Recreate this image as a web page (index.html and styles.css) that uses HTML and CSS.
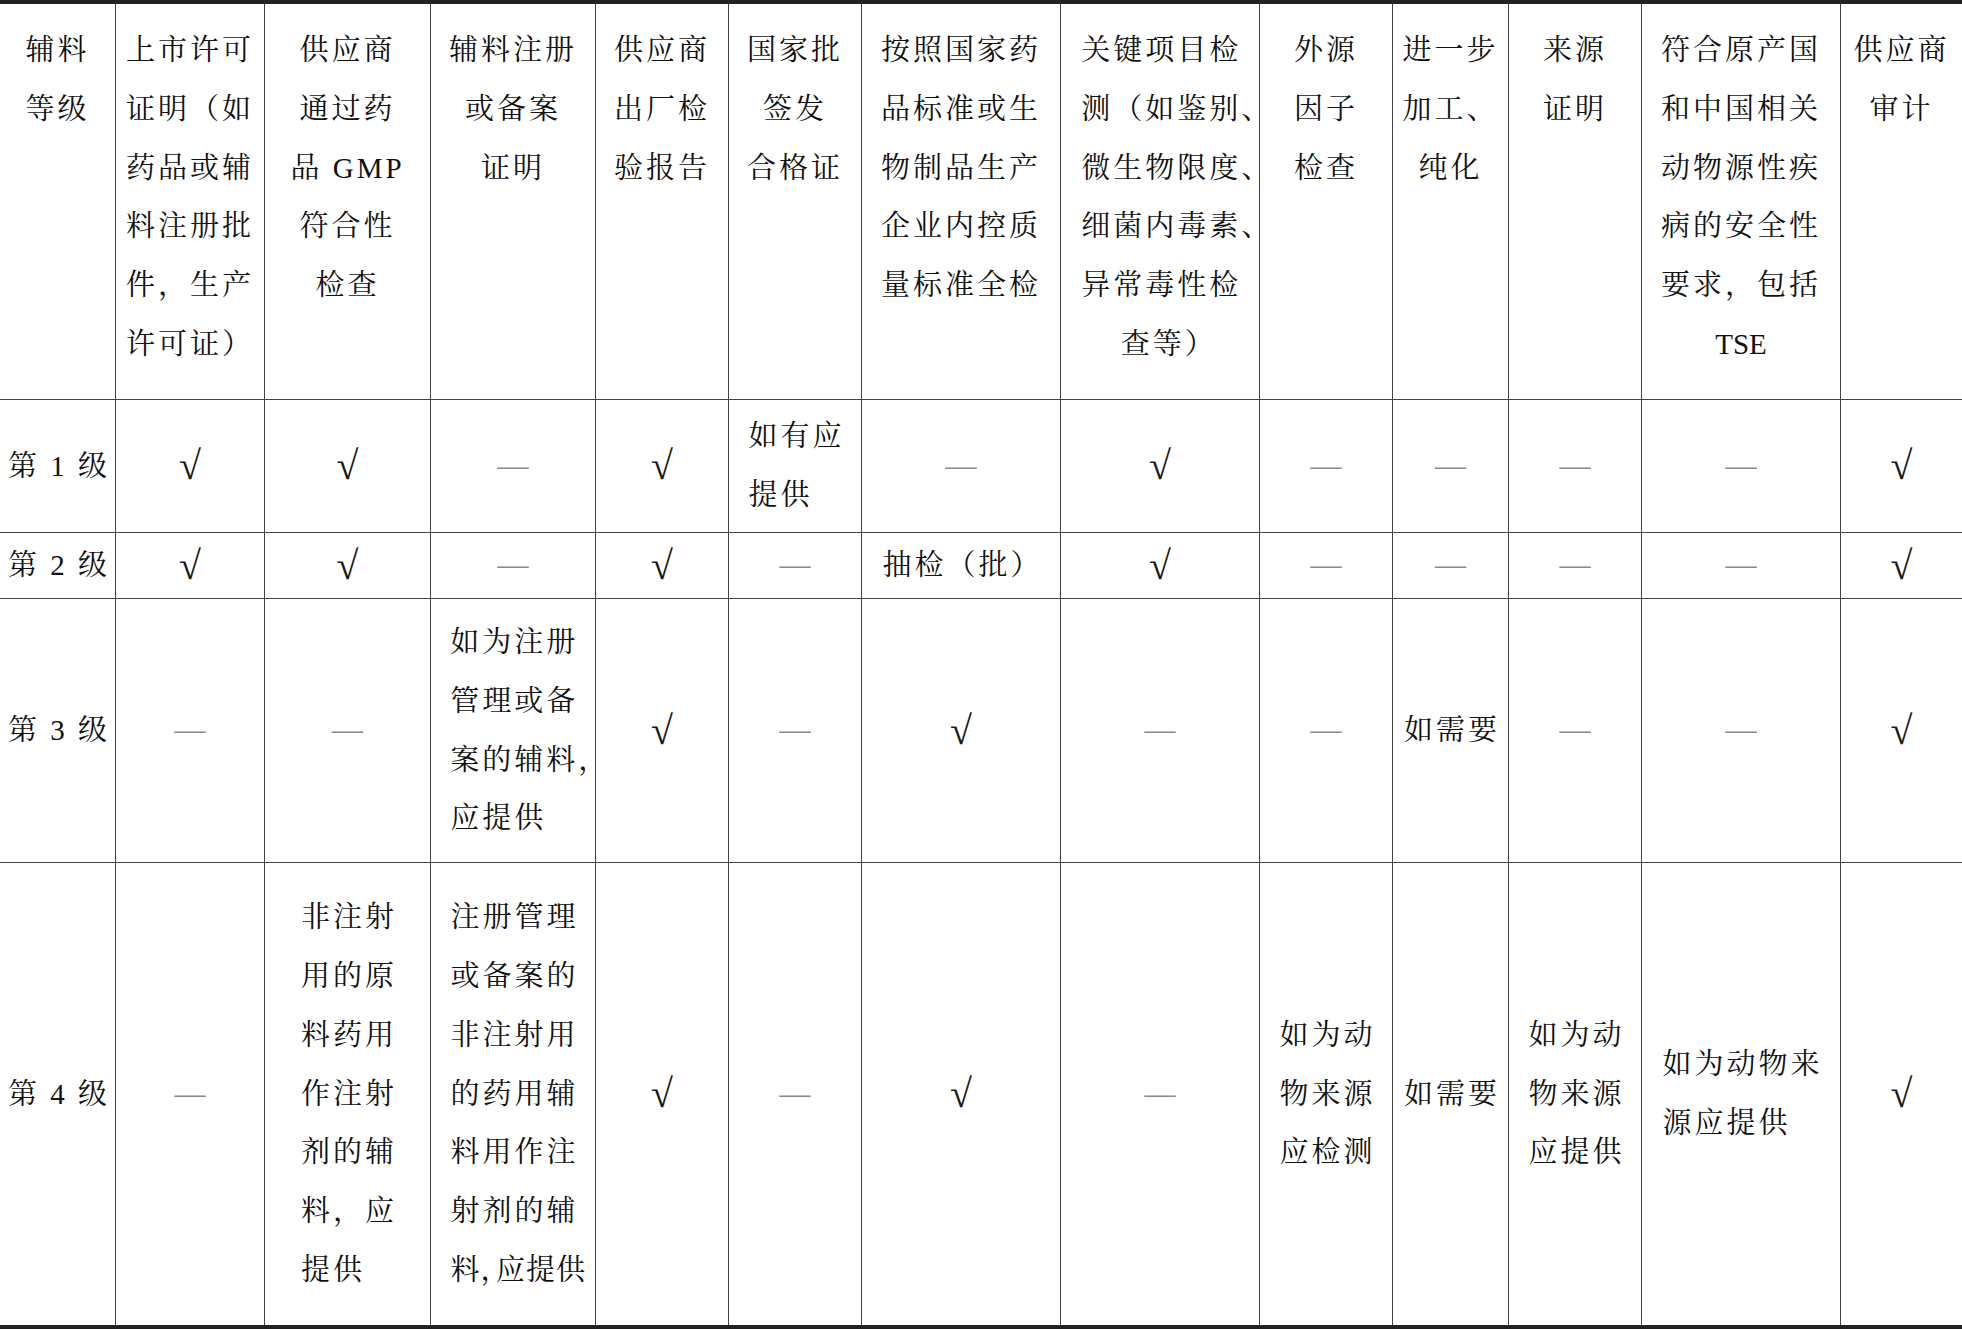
FILE: index.html
```html
<!DOCTYPE html>
<html lang="zh-CN">
<head>
<meta charset="utf-8">
<title>辅料等级</title>
<link rel="stylesheet" href="styles.css">
</head>
<body>
<div class="grid">
  <!-- header -->
  <div class="c hd">辅料<br>等级</div>
  <div class="c hd">上市许可<br>证明（如<br>药品或辅<br>料注册批<br>件，生产<br>许可证）</div>
  <div class="c hd">供应商<br>通过药<br>品 GMP<br>符合性<br>检查</div>
  <div class="c hd">辅料注册<br>或备案<br>证明</div>
  <div class="c hd">供应商<br>出厂检<br>验报告</div>
  <div class="c hd">国家批<br>签发<br>合格证</div>
  <div class="c hd">按照国家药<br>品标准或生<br>物制品生产<br>企业内控质<br>量标准全检</div>
  <div class="c hd"><span class="hb">关键项目检<br>测（如鉴别<span class="hg">、</span><br>微生物限度<span class="hg">、</span><br>细菌内毒素<span class="hg">、</span><br>异常毒性检<span class="ll">查等<span class="h">）</span></span></span></div>
  <div class="c hd">外源<br>因子<br>检查</div>
  <div class="c hd">进一步<br>加工、<br>纯化</div>
  <div class="c hd">来源<br>证明</div>
  <div class="c hd">符合原产国<br>和中国相关<br>动物源性疾<br>病的安全性<br>要求，包括<br><span class="lat">TSE</span></div>
  <div class="c hd last">供应商<br>审计</div>

  <!-- row 1 -->
  <div class="c bd"><span class="t">第 1 级</span></div>
  <div class="c bd"><span class="ok">√</span></div>
  <div class="c bd"><span class="ok">√</span></div>
  <div class="c bd"><span class="no">—</span></div>
  <div class="c bd"><span class="ok">√</span></div>
  <div class="c bd"><span class="t">如有应<br>提供</span></div>
  <div class="c bd"><span class="no">—</span></div>
  <div class="c bd"><span class="ok">√</span></div>
  <div class="c bd"><span class="no">—</span></div>
  <div class="c bd"><span class="no">—</span></div>
  <div class="c bd"><span class="no">—</span></div>
  <div class="c bd"><span class="no">—</span></div>
  <div class="c bd last"><span class="ok">√</span></div>

  <!-- row 2 -->
  <div class="c bd"><span class="t">第 2 级</span></div>
  <div class="c bd"><span class="ok">√</span></div>
  <div class="c bd"><span class="ok">√</span></div>
  <div class="c bd"><span class="no">—</span></div>
  <div class="c bd"><span class="ok">√</span></div>
  <div class="c bd"><span class="no">—</span></div>
  <div class="c bd"><span class="t">抽检（批）</span></div>
  <div class="c bd"><span class="ok">√</span></div>
  <div class="c bd"><span class="no">—</span></div>
  <div class="c bd"><span class="no">—</span></div>
  <div class="c bd"><span class="no">—</span></div>
  <div class="c bd"><span class="no">—</span></div>
  <div class="c bd last"><span class="ok">√</span></div>

  <!-- row 3 -->
  <div class="c bd"><span class="t">第 3 级</span></div>
  <div class="c bd"><span class="no">—</span></div>
  <div class="c bd"><span class="no">—</span></div>
  <div class="c bd"><span class="t">如为注册<br>管理或备<br>案的辅料<span class="hg">，</span><br>应提供</span></div>
  <div class="c bd"><span class="ok">√</span></div>
  <div class="c bd"><span class="no">—</span></div>
  <div class="c bd"><span class="ok">√</span></div>
  <div class="c bd"><span class="no">—</span></div>
  <div class="c bd"><span class="no">—</span></div>
  <div class="c bd"><span class="t">如需要</span></div>
  <div class="c bd"><span class="no">—</span></div>
  <div class="c bd"><span class="no">—</span></div>
  <div class="c bd last"><span class="ok">√</span></div>

  <!-- row 4 -->
  <div class="c bd r4"><span class="t">第 4 级</span></div>
  <div class="c bd r4"><span class="no">—</span></div>
  <div class="c bd r4"><span class="t">非注射<br>用的原<br>料药用<br>作注射<br>剂的辅<br>料，应<br>提供</span></div>
  <div class="c bd r4"><span class="t">注册管理<br>或备案的<br>非注射用<br>的药用辅<br>料用作注<br>射剂的辅<br><span class="tight">料<span class="h">，</span>应提供</span></span></div>
  <div class="c bd r4"><span class="ok">√</span></div>
  <div class="c bd r4"><span class="no">—</span></div>
  <div class="c bd r4"><span class="ok">√</span></div>
  <div class="c bd r4"><span class="no">—</span></div>
  <div class="c bd r4"><span class="t">如为动<br>物来源<br>应检测</span></div>
  <div class="c bd r4"><span class="t">如需要</span></div>
  <div class="c bd r4"><span class="t">如为动<br>物来源<br>应提供</span></div>
  <div class="c bd r4"><span class="t">如为动物来<br>源应提供</span></div>
  <div class="c bd r4 last"><span class="ok">√</span></div>
</div>
</body>
</html>
```

FILE: styles.css
```css
* { box-sizing: border-box; }

html, body {
  margin: 0;
  padding: 0;
  background: #ffffff;
}

body {
  font-family: "Liberation Serif", "Noto Serif CJK SC", "Noto Sans CJK SC", serif;
  color: #111;
  font-size: 29px;
  letter-spacing: 3px;
  line-height: 58.8px;
}

.grid {
  display: grid;
  width: 1962px;
  grid-template-columns: 116px 149px 166px 165px 133px 133px 199px 199px 133px 116px 133px 199px 121px;
  grid-template-rows: 396px 133px 66px 264px 462px;
  border-top: 4px solid #222;
  border-bottom: 4px solid #222;
}

.c {
  border-right: 1.5px solid #444;
  border-bottom: 1.5px solid #444;
  white-space: nowrap;
}

.c.last { border-right: none; }
.c.r4 { border-bottom: none; }

.hd {
  text-align: center;
  padding-top: 17px;
}

.hb {
  display: inline-block;
  text-align: left;
  margin-right: -3px;
}

.ll {
  display: block;
  text-align: center;
}

.lat { letter-spacing: 0; }

.bd {
  display: flex;
  align-items: center;
  justify-content: center;
}

.t {
  display: inline-block;
  text-align: left;
  margin-right: -3px;
}

.h {
  font-feature-settings: "halt" 1;
}

.hg {
  font-feature-settings: "halt" 1;
  margin-right: -17px;
}

.tight {
  letter-spacing: 1px;
  margin-right: -8px;
}

.ok {
  font-family: "Liberation Serif", "DejaVu Serif", serif;
  font-size: 40px;
  line-height: 40px;
  letter-spacing: 0;
  color: #1a1a1a;
}

.no {
  letter-spacing: 0;
  color: #8a8a8a;
  font-size: 31px;
}
```
